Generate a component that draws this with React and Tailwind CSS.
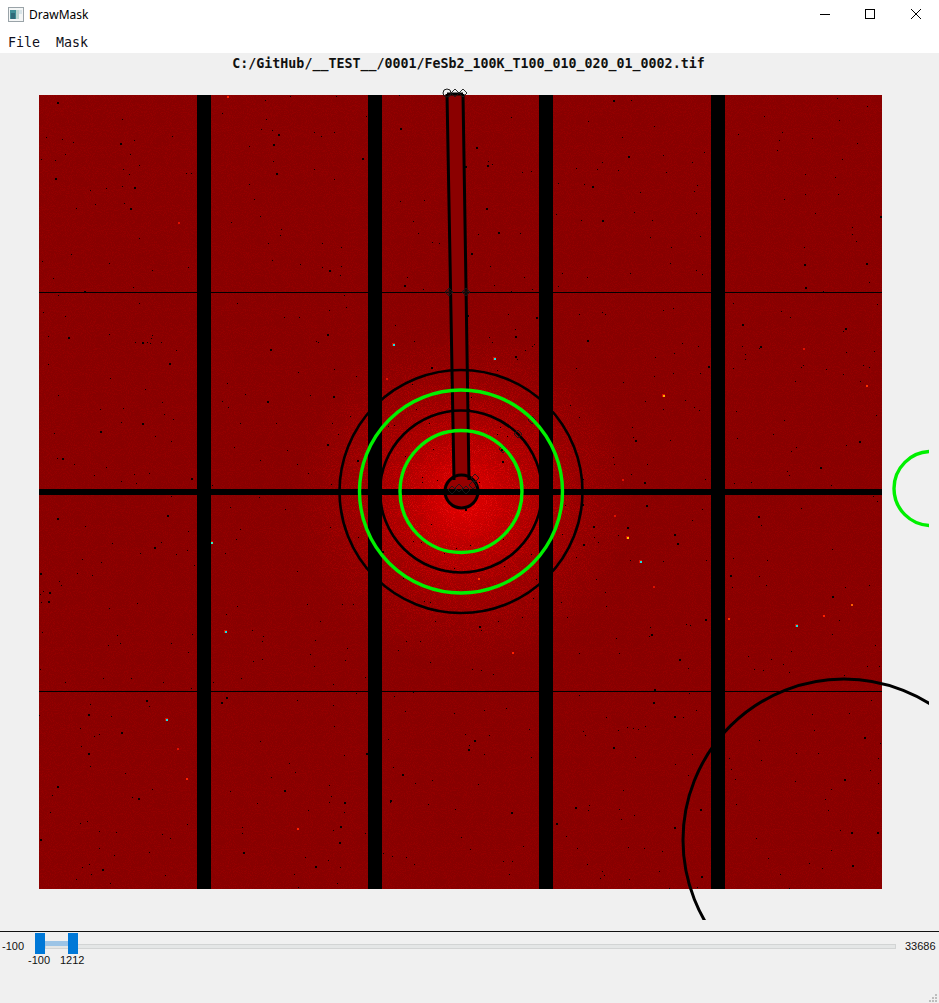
import React, { useMemo } from 'react';

const MONO = { fontFamily: '"DejaVu Sans Mono", monospace' };

// hot pixels on the detector: x, y, core colour, bright halo or not
const HOT_SPOTS = [
  [393, 344, '#19e0e0', 1], [494, 358, '#19e0e0', 1], [663, 395, '#ffb000', 1], [866, 385, '#ff3000', 0],
  [711, 367, '#ff9000', 0], [211, 542, '#30f0c0', 1], [225, 631, '#19e0e0', 1], [627, 537, '#ffc000', 1],
  [640, 561, '#19e0e0', 1], [796, 625, '#19e0e0', 1], [851, 604, '#ff6000', 0], [728, 618, '#ff3000', 0],
  [166, 719, '#19e0e0', 1], [186, 778, '#ff2000', 0], [297, 828, '#ff2000', 0], [512, 652, '#ff2000', 0],
  [478, 578, '#ff3000', 0], [803, 348, '#e01000', 0], [177, 748, '#e01000', 0], [227, 96, '#ff2000', 0],
  [622, 479, '#e01000', 0], [614, 515, '#e01000', 0], [653, 586, '#e01000', 0], [823, 615, '#ff2000', 0],
  [386, 378, '#e01000', 0], [178, 222, '#e01000', 0],
];

const BANDS = [197, 368, 539, 711];
const RING_DIAMONDS = [[532, 420], [518, 434], [503, 449], [475, 478]];
const STOP_DIAMONDS = [[449, 292], [466, 292], [455, 93], [463, 93], [452, 490], [459, 488], [466, 490], [473, 485]];

// small seeded generator so the specks stay put between renders
const makeSpecks = () => {
  let seed = 48271;
  const next = () => {
    seed = (seed * 16807) % 2147483647;
    return seed / 2147483647;
  };
  let d = '';
  for (let i = 0; i < 760; i++) {
    const x = 39 + Math.floor(next() * 843);
    const y = 95 + Math.floor(next() * 794);
    const s = next() > 0.82 ? 2 : 1;
    d += `M${x} ${y}h${s}v${s}h-${s}z`;
  }
  return d;
};

const Diamond = ({ x, y, r = 4 }) => (
  <path d={`M${x - r} ${y}L${x} ${y - r}L${x + r} ${y}L${x} ${y + r}z`} fill="none" stroke="#1a1a1a" strokeWidth="0.9" />
);

const HotSpot = ({ x, y, color, bright }) => (
  <g shapeRendering="crispEdges">
    {bright ? <rect x={x - 1} y={y - 1} width="3" height="3" fill="#d81000" /> : null}
    <rect x={x} y={y} width="2" height="2" fill={color} />
  </g>
);

const DetectorImage = () => {
  const specks = useMemo(makeSpecks, []);

  return (
    <svg className="block" width="939" height="858" viewBox="0 73 939 858">
      <defs>
        <filter id="grain" x="0" y="0" width="100%" height="100%">
          <feTurbulence type="fractalNoise" baseFrequency="0.95" numOctaves="2" seed="7" result="n" />
          <feColorMatrix in="n" type="matrix" values="0 0 0 0 0  0 0 0 0 0  0 0 0 0 0  6 0 0 0 -3" result="a" />
          <feComposite in="SourceGraphic" in2="a" operator="in" />
        </filter>
        <radialGradient id="glow" gradientUnits="userSpaceOnUse" cx="464" cy="498" r="170">
          <stop offset="0" stopColor="#ff0000" stopOpacity="0.78" />
          <stop offset="0.25" stopColor="#ff0000" stopOpacity="0.42" />
          <stop offset="0.5" stopColor="#ff0000" stopOpacity="0.19" />
          <stop offset="0.75" stopColor="#ff0000" stopOpacity="0.06" />
          <stop offset="1" stopColor="#ff0000" stopOpacity="0" />
        </radialGradient>
        <radialGradient id="glowGrain" gradientUnits="userSpaceOnUse" cx="464" cy="498" r="170">
          <stop offset="0" stopColor="#ff1010" stopOpacity="0.5" />
          <stop offset="0.6" stopColor="#ff1010" stopOpacity="0.2" />
          <stop offset="1" stopColor="#ff1010" stopOpacity="0" />
        </radialGradient>
        <clipPath id="plotClip">
          <rect x="0" y="73" width="929" height="847" />
        </clipPath>
      </defs>

      {/* detector image */}
      <rect x="39" y="95" width="843" height="794" fill="#880000" />
      <rect x="39" y="95" width="843" height="794" fill="#940000" filter="url(#grain)" />
      <circle cx="464" cy="498" r="170" fill="url(#glow)" />
      <circle cx="464" cy="498" r="170" fill="url(#glowGrain)" filter="url(#grain)" />
      <path d={specks} fill="#050000" shapeRendering="crispEdges" />
      {HOT_SPOTS.map(([x, y, color, bright]) => (
        <HotSpot key={`${x}-${y}`} x={x} y={y} color={color} bright={bright} />
      ))}

      {/* masked beam stop */}
      <path d="M447 94L463 94L469 480L454 480z" fill="#8b0000" />
      <circle cx="461.5" cy="491.5" r="16.5" fill="#960000" />

      {/* module gaps */}
      <g fill="#000" shapeRendering="crispEdges">
        {BANDS.map((x) => (
          <rect key={x} x={x} y="95" width="14" height="794" />
        ))}
        <rect x="39" y="489" width="843" height="6" />
        <rect x="39" y="292" width="843" height="1" />
        <rect x="39" y="691" width="843" height="1" />
      </g>

      {/* mask shapes */}
      <g fill="none" stroke="#000" strokeWidth="2.6" clipPath="url(#plotClip)">
        <path d="M447 94L454 480M463 94L469 480M447 94H463" strokeWidth="3" />
        <circle cx="461.5" cy="491.5" r="16.5" strokeWidth="3" />
        <circle cx="461" cy="491.5" r="81" />
        <circle cx="461" cy="491.5" r="121.5" />
        <circle cx="844" cy="840" r="161" strokeWidth="3" />
      </g>
      {STOP_DIAMONDS.map(([x, y]) => (
        <Diamond key={`${x}-${y}`} x={x} y={y} />
      ))}
      {RING_DIAMONDS.map(([x, y]) => (
        <Diamond key={`${x}-${y}`} x={x} y={y} />
      ))}
      <circle cx="447" cy="93" r="4" fill="none" stroke="#1a1a1a" strokeWidth="1" />
      <path d="M445 292h8M449 288v8M462 292h8M466 288v8" stroke="#1a1a1a" strokeWidth="0.8" />

      {/* calibration rings */}
      <g fill="none" stroke="#00f000" strokeWidth="3.4" clipPath="url(#plotClip)">
        <circle cx="461" cy="491.5" r="61" />
        <circle cx="461" cy="491.5" r="101.5" />
        <circle cx="931" cy="488.5" r="37" />
      </g>
    </svg>
  );
};

const App = () => {
  return (
    <div className="flex flex-col w-[939px] h-[1003px] overflow-hidden bg-[#f0f0f0] text-black">
      {/* Title bar */}
      <div className="flex items-center h-[30px] bg-white pl-2">
        <svg width="16" height="15" viewBox="0 0 16 15" className="shrink-0 mb-[2px]">
          <rect x="0.5" y="0.5" width="15" height="14" fill="#f4f6f6" stroke="#9aa3a8" />
          <rect x="2" y="3" width="6" height="9" fill="#3f8f96" />
          <rect x="3" y="6" width="4" height="6" fill="#2f6b78" />
          <rect x="8" y="3" width="3" height="9" fill="#bcd6d0" />
          <rect x="11" y="3" width="3" height="4" fill="#d8e4e8" />
        </svg>
        <span className="ml-[5px] text-[12px] leading-none" style={{ fontFamily: '"Noto Sans", sans-serif' }}>DrawMask</span>
        <div className="ml-auto flex items-center pr-[18px] pb-[2px]">
          <svg width="10" height="10" viewBox="0 0 10 10" shapeRendering="crispEdges" className="mr-[35px]">
            <path d="M0 5.5H10" stroke="#000" strokeWidth="1" />
          </svg>
          <svg width="10" height="10" viewBox="0 0 10 10" shapeRendering="crispEdges" className="mr-[36px]">
            <rect x="0.5" y="0.5" width="9" height="9" fill="none" stroke="#000" strokeWidth="1" />
          </svg>
          <svg width="10" height="10" viewBox="0 0 10 10">
            <path d="M0 0L10 10M10 0L0 10" stroke="#000" strokeWidth="1" />
          </svg>
        </div>
      </div>

      {/* Menu bar */}
      <div className="flex items-center gap-4 h-[23px] bg-white pl-2 pt-[2px] text-[13.3px] leading-none text-[#101020]" style={MONO}>
        <span>File</span>
        <span>Mask</span>
      </div>

      {/* Image title */}
      <div className="h-[20px] flex items-center justify-center pt-[2px] pr-[2px] text-[13.3px] font-bold leading-none text-[#111]" style={MONO}>
        C:/GitHub/__TEST__/0001/FeSb2_100K_T100_010_020_01_0002.tif
      </div>

      <DetectorImage />

      {/* Colour range slider */}
      <div className="flex-1 border-t border-[#111]" style={{ fontFamily: '"Liberation Sans", sans-serif' }}>
        <div className="relative h-[71px] text-[11px] leading-none text-[#111]">
          <div className="flex items-center pt-[5px] pl-[2px] h-[24px]">
            <span className="w-[43px]">-100</span>
            <div className="w-[851px] h-[5px] bg-[#e4e6e6] border border-[#d2d4d4]" />
            <span className="ml-[9px]">33686</span>
          </div>
          <div className="absolute left-[45px] top-[9px] w-[23px] h-[5px] bg-[#9cc4e6]" />
          <div className="absolute left-[35px] top-[1px] w-[10px] h-[21px] bg-[#0078d7]" />
          <div className="absolute left-[68px] top-[1px] w-[10px] h-[21px] bg-[#0078d7]" />
          <span className="absolute left-[28px] top-[23px]">-100</span>
          <span className="absolute left-[60px] top-[23px]">1212</span>
          {/* resize grip */}
          <svg className="absolute right-[1px] bottom-[0px]" width="9" height="9" viewBox="0 0 9 9">
            <path d="M6 0h2v2h-2zM3 3h2v2h-2zM6 3h2v2h-2zM0 6h2v2h-2zM3 6h2v2h-2zM6 6h2v2h-2z" fill="#bdbdbd" />
          </svg>
        </div>
      </div>
    </div>
  );
};

export default App;
